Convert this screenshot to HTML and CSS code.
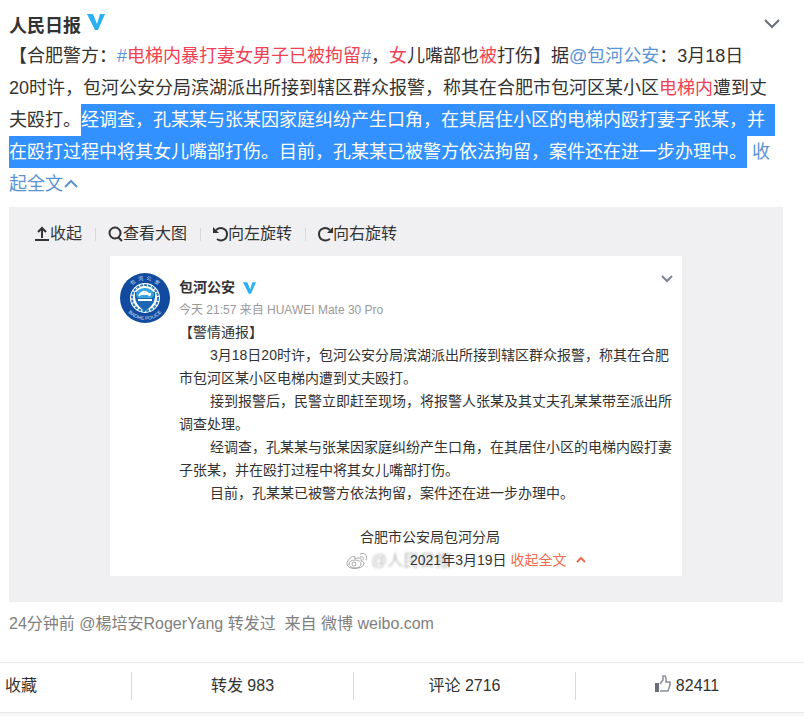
FILE: index.html
```
<!DOCTYPE html>
<html lang="zh-CN">
    <head>
        <meta charset="UTF-8">
        <meta name="viewport" content="width=device-width, initial-scale=1.0">
        <title>微博</title>
        <link rel="stylesheet" href="styles.css">
    </head>
    <body>
        <div class="card">
            <!-- 作者 -->
            <div class="head">
                <a href="#" class="name">人民日报</a>
                <svg class="vip" width="18" height="16" viewBox="0 0 18 16"><path d="M0 0h6l4 10 3-10h5l-7 16H8z" fill="#2ab0f5"/></svg>
                <button class="more" type="button" aria-label="更多">
                    <svg width="16" height="10" viewBox="0 0 16 10"><path d="M1 1l7 7 7-7" fill="none" stroke="#696e78" stroke-width="2"/></svg>
                </button>
            </div>
            <!-- 正文 -->
            <p class="text">【合肥警方：<a href="#">#<em>电梯内暴打妻女男子已被拘留</em>#</a>，<em>女</em>儿嘴部也<em>被</em>打伤】据<a href="#">@包河公安</a>：3月18日<br>20时许，包河公安分局滨湖派出所接到辖区群众报警，称其在合肥市包河区某小区<em>电梯内</em>遭到丈<br>夫殴打。<mark>经调查，孔某某与张某因家庭纠纷产生口角，在其居住小区的电梯内殴打妻子张某，并&nbsp;&nbsp;<br>在殴打过程中将其女儿嘴部打伤。目前，孔某某已被警方依法拘留，案件还在进一步办理中。</mark> <a href="#">收<br>起全文<svg width="14" height="9" viewBox="0 0 14 9"><path d="M1 8l6-6 6 6" fill="none" stroke="#5a93d6" stroke-width="2"/></svg></a></p>
            <!-- 展开的图片 -->
            <div class="media">
                <div class="tools">
                    <button type="button"><svg width="15" height="16" viewBox="0 0 15 16"><path d="M0 14h14M7 12V2M3 6l4-4 4 4" fill="none" stroke="#333" stroke-width="2"/></svg>收起</button>
                    <button type="button"><svg width="15" height="16" viewBox="0 0 15 16"><circle cx="7" cy="7" r="5.500" fill="none" stroke="#333" stroke-width="2"/><path d="M10 11l4 4" stroke="#333" stroke-width="2"/></svg>查看大图</button>
                    <button type="button"><svg width="15" height="16" viewBox="0 0 15 16"><path d="M3 4c5-4 11-1 11 4 0 6-6 8-10 5" fill="none" stroke="#333" stroke-width="2"/><path d="M0 1v6h6z" fill="#333"/></svg>向左旋转</button>
                    <button type="button"><svg width="15" height="16" viewBox="0 0 15 16"><path d="M12 4C7 0 1 3 1 8c0 6 6 8 11 5" fill="none" stroke="#333" stroke-width="2"/><path d="M15 1v6H9z" fill="#333"/></svg>向右旋转</button>
                </div>
                <div class="pic">
                    <svg class="avatar" width="50" height="50" viewBox="0 0 50 50">
                        <defs>
                            <path id="arcTop" d="M7 25a18 18 0 0 1 36 0"/>
                            <path id="arcBottom" d="M3 25a22 22 0 0 0 44 0"/>
                        </defs>
                        <circle cx="25" cy="25" r="25" fill="#114a9f"/>
                        <circle cx="25" cy="25" r="15" fill="#fff"/>
                        <circle cx="25" cy="25" r="13" fill="none" stroke="#2b7cc0" stroke-width="2" stroke-dasharray="3 1"/>
                        <path d="M15 19c3 0 6-1 10-4 4 3 7 4 10 4 1 9-3 15-10 19-7-4-11-10-10-19z" fill="#1b67b4"/>
                        <path d="M16 22c0-4 4-7 9-7s9 3 9 7l-2 3H18z" fill="#35a5dc"/>
                        <path d="M19 23c4-6 8-5 11 0M21 21h10M18 27h14" fill="none" stroke="#fff" stroke-width="2"/>
                        <text class="seal"><textPath href="#arcTop" startOffset="50%">包 &#160;河 &#160;公 &#160;安</textPath></text>
                        <text class="seal"><textPath href="#arcBottom" startOffset="50%">BAOHE POLICE</textPath></text>
                    </svg>
                    <div class="notice">
                        <div class="notice-head">
                            <strong>包河公安</strong>
                            <svg width="13" height="12" viewBox="0 0 18 16"><path d="M0 0h6l4 10 3-10h5l-7 16H8z" fill="#2ab0f5"/></svg>
                            <svg class="arrow" width="12" height="8" viewBox="0 0 12 8"><path d="M1 1l5 5 5-5" fill="none" stroke="#7b8492" stroke-width="2"/></svg>
                        </div>
                        <div class="time">今天 21:57 来自 HUAWEI Mate 30 Pro</div>
                        <div>【警情通报】</div>
                        <p>3月18日20时许，包河公安分局滨湖派出所接到辖区群众报警，称其在合肥<br>市包河区某小区电梯内遭到丈夫殴打。</p>
                        <p>接到报警后，民警立即赶至现场，将报警人张某及其丈夫孔某某带至派出所<br>调查处理。</p>
                        <p>经调查，孔某某与张某因家庭纠纷产生口角，在其居住小区的电梯内殴打妻<br>子张某，并在殴打过程中将其女儿嘴部打伤。</p>
                        <p>目前，孔某某已被警方依法拘留，案件还在进一步办理中。</p>
                        <div class="sign">合肥市公安局包河分局</div>
                        <div class="date">
                            <span class="watermark">
                                <svg width="22" height="18" viewBox="0 0 22 18"><g fill="none" stroke="#a5a5a5"><path d="M9 5C6 3 1 8 1 12c0 6 15 6 17 0 0-2-1-3-3-3 1-3-2-4-6-2z"/><ellipse cx="9" cy="12" rx="6" ry="4"/><circle cx="8" cy="12" r="2"/><path d="M14 5c3-1 4 1 3 3M14 2c5-2 8 2 6 6"/></g></svg>
                                <i>@人民日报</i>
                            </span>
                            <span class="day">2021年3月19日</span>
                            <a href="#">收起全文<svg width="10" height="7" viewBox="0 0 10 7"><path d="M1 6l4-4 4 4" fill="none" stroke="#f26b50" stroke-width="2"/></svg></a>
                        </div>
                    </div>
                </div>
            </div>
            <div class="from">24分钟前 @楊培安RogerYang 转发过&nbsp; 来自 微博 weibo.com</div>
            <!-- 底部操作 -->
            <div class="handle">
                <button type="button">收藏</button>
                <button type="button">转发 983</button>
                <button type="button">评论 2716</button>
                <button type="button"><svg width="16" height="18" viewBox="0 0 16 18"><path d="M0 8h4v9H0z" fill="#696e78"/><path d="M5 9l3-4V1h2l1 2v4h4v3l-2 6H5" fill="#fff" stroke="#8b8f98" stroke-width="1.500"/></svg>82411</button>
            </div>
        </div>
    </body>
</html>
```
FILE: styles.css
```
*{
    margin: 0;
    padding: 0;
    box-sizing: border-box;
}
body{
    background-color: #f7f7f7;
    color: #333;
    font-family: "Liberation Sans", "Noto Sans CJK SC", sans-serif;
    text-spacing-trim: space-all;
}
a{
    color: #5a93d6;
    text-decoration: none;
}
em{
    color: #f04155;
    font-style: normal;
}
button{
    border: none;
    background: none;
    color: #333;
    font: inherit;
    cursor: pointer;
}
.card{
    background-color: #fff;
    border-bottom: 1px solid #e8e8e8;
}
/* 作者 */
.head{
    display: flex;
    align-items: center;
    height: 40px;
    padding: 8px 24px 0 9px;
}
.name{
    color: #333;
    font-size: 18px;
    font-weight: bold;
}
.vip{
    margin: 0 0 4px 6px;
}
.more{
    display: flex;
    margin-left: auto;
}
/* 正文 */
.text{
    padding-left: 9px;
    font-size: 18px;
    line-height: 32px;
    white-space: nowrap;
}
.text mark{
    padding: 6px 0;
    background-color: #3390ff;
    color: #fff;
}
.text svg{
    margin-left: 1px;
    vertical-align: 2px;
}
/* 展开的图片 */
.media{
    margin: 7px 21px 0 9px;
    padding: 15px 0 26px;
    background-color: #f0f0f2;
}
.tools{
    display: flex;
    padding: 0 26px;
    font-size: 16px;
    line-height: 24px;
}
.tools button{
    display: flex;
    align-items: center;
    position: relative;
}
.tools button + button{
    margin-left: 26px;
}
.tools button + button::before{
    content: "";
    position: absolute;
    left: -13px;
    top: 6px;
    width: 1px;
    height: 13px;
    background-color: #d9d9d9;
}
.pic{
    display: flex;
    max-width: 572px;
    margin: 10px auto 0;
    padding: 17px 8px 4px 10px;
    background-color: #fff;
    font-size: 14px;
    line-height: 23px;
    white-space: nowrap;
}
.avatar{
    flex: none;
    margin-right: 9px;
}
.seal{
    fill: #d5e4f5;
    font-size: 5px;
    text-anchor: middle;
}
.notice{
    flex: 1;
    min-width: 0;
}
.notice-head{
    display: flex;
    align-items: center;
    padding-top: 3px;
}
.notice-head strong{
    margin-right: 8px;
}
.notice-head .arrow{
    margin: -18px 1px 0 auto;
}
.time{
    color: #999;
    font-size: 12px;
    line-height: 22px;
}
.notice p{
    text-indent: 31px;
}
.sign{
    padding: 21px 0 0 181px;
}
.date{
    position: relative;
    padding-left: 231px;
}
.date .day{
    position: relative;
}
.date a{
    color: #f26b50;
}
.date a svg{
    margin-left: 10px;
    vertical-align: 2px;
}
.watermark{
    display: flex;
    align-items: center;
    position: absolute;
    left: 167px;
    top: 0;
}
.watermark i{
    margin-left: 3px;
    color: #bbb;
    font-size: 16px;
    font-style: normal;
    filter: blur(1px);
}
/* 来源 */
.from{
    padding: 10px 9px 26px;
    color: #808080;
    font-size: 16px;
    line-height: 24px;
}
/* 底部操作 */
.handle{
    display: grid;
    grid-template-columns: 132fr 222fr 222fr 222fr;
    padding: 9px 6px 12px 0;
    border-top: 1px solid #e8e8e8;
    font-size: 16px;
    line-height: 28px;
}
.handle button{
    display: flex;
    align-items: center;
    justify-content: center;
    border-right: 1px solid #d9d9d9;
}
.handle button:first-child{
    justify-content: flex-start;
    padding-left: 5px;
}
.handle button:last-child{
    border-right: none;
}
.handle svg{
    margin: 0 5px 4px 0;
}
```
